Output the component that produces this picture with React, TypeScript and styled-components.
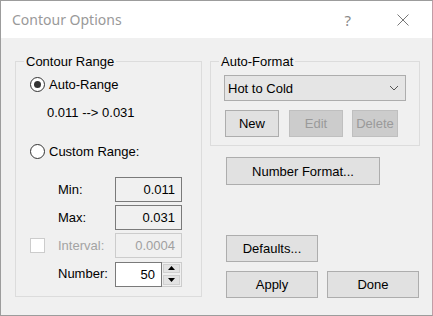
import { createGlobalStyle, styled } from 'styled-components';

const GlobalStyle = createGlobalStyle`
  html, body {
    margin: 0;
    padding: 0;
    background: #f0f0f0;
  }
  body {
    font-family: "Liberation Sans", Arial, sans-serif;
    font-size: 13px;
    color: #000;
  }
`;

const Window = styled.div`
  width: 433px;
  height: 316px;
  box-sizing: border-box;
  border: 1px solid #9c9c9c;
  border-right-color: #c29ca6;
  display: flex;
  flex-direction: column;
  background: #f0f0f0;
  overflow: hidden;
`;

const TitleBar = styled.div`
  height: 37px;
  flex-shrink: 0;
  background: #fff;
  display: flex;
  align-items: center;
  padding-left: 11px;
  padding-right: 23px;
  font-family: "Noto Sans", "Open Sans", sans-serif;
  color: #999;
`;

const TitleText = styled.span`
  flex: 1;
  font-size: 14px;
`;

const HelpGlyph = styled.span`
  font-size: 15px;
  color: #8a8a8a;
  margin-right: 46px;
`;

const Body = styled.div`
  flex: 1;
  display: flex;
  gap: 8px;
  padding: 16px 0 0 14px;
`;

const Group = styled.fieldset<{ $width: number; $height: number }>`
  margin: 0;
  padding: 0;
  min-width: 0;
  width: ${(p) => p.$width}px;
  height: ${(p) => p.$height}px;
  box-sizing: border-box;
  border: 1px solid #dcdcdc;
  legend {
    margin-left: 8px;
    padding: 0 2px;
    line-height: 15px;
  }
`;

const GroupInner = styled.div`
  display: flex;
  flex-direction: column;
  align-items: flex-start;
  padding: 8px 0 0 14px;
`;

const RadioRow = styled.label<{ $mt?: number }>`
  display: flex;
  align-items: center;
  gap: 4px;
  height: 15px;
  margin-top: ${(p) => p.$mt ?? 0}px;
`;

const RadioCircle = styled.span<{ $checked?: boolean }>`
  width: 15px;
  height: 15px;
  box-sizing: border-box;
  border-radius: 50%;
  border: 1px solid #333;
  background: #fff;
  display: flex;
  align-items: center;
  justify-content: center;
  &::after {
    content: '';
    width: 7px;
    height: 7px;
    border-radius: 50%;
    background: ${(p) => (p.$checked ? '#333' : 'transparent')};
  }
`;

const RangeText = styled.div`
  margin: 13px 0 0 17px;
  line-height: 15px;
`;

const FormGrid = styled.div`
  display: grid;
  grid-template-columns: 28px 57px 67px;
  grid-auto-rows: 25px;
  row-gap: 3px;
  align-items: center;
  margin-top: 18px;
`;

const FieldLabel = styled.span<{ $disabled?: boolean }>`
  grid-column: 2;
  color: ${(p) => (p.$disabled ? '#a3a3a3' : '#000')};
`;

const Field = styled.div<{ $disabled?: boolean }>`
  grid-column: 3;
  height: 25px;
  box-sizing: border-box;
  border: 1px solid ${(p) => (p.$disabled ? '#cccccc' : '#7a7a7a')};
  background: #f0f0f0;
  color: ${(p) => (p.$disabled ? '#a0a0a0' : '#000')};
  display: flex;
  align-items: center;
  justify-content: flex-end;
  padding-right: 6px;
`;

const CheckBox = styled.span`
  grid-column: 1;
  width: 15px;
  height: 15px;
  box-sizing: border-box;
  border: 1px solid #cccccc;
  background: #fff;
`;

const NumberBox = styled.div`
  grid-column: 3;
  height: 25px;
  display: flex;
  margin-top: 1px;
`;

const NumberInput = styled.div`
  width: 47px;
  box-sizing: border-box;
  border: 1px solid #7a7a7a;
  background: #fff;
  display: flex;
  align-items: center;
  justify-content: flex-end;
  padding-right: 6px;
`;

const Spinner = styled.div`
  width: 20px;
  box-sizing: border-box;
  border: 1px solid #cccccc;
  border-left: none;
  display: flex;
  flex-direction: column;
  background: #f0f0f0;
`;

const SpinButton = styled.div`
  flex: 1;
  margin: 1px;
  background: #e3e3e3;
  border: 1px solid #d0d0d0;
  display: flex;
  align-items: center;
  justify-content: center;
`;

const RightColumn = styled.div`
  display: flex;
  flex-direction: column;
  align-items: flex-start;
`;

const AutoInner = styled.div`
  display: flex;
  flex-direction: column;
  padding: 6px 0 0 13px;
`;

const Combo = styled.div`
  width: 182px;
  height: 26px;
  box-sizing: border-box;
  border: 1px solid #adadad;
  background: #e5e5e5;
  display: flex;
  align-items: center;
  justify-content: space-between;
  padding: 0 6px 0 3px;
`;

const ButtonRow = styled.div`
  display: flex;
  margin: 9px 0 0 1px;
`;

const Button = styled.div<{ $w: number; $h?: number; $disabled?: boolean; $ml?: number; $mt?: number }>`
  width: ${(p) => p.$w}px;
  height: ${(p) => p.$h ?? 27}px;
  margin-left: ${(p) => p.$ml ?? 0}px;
  margin-top: ${(p) => p.$mt ?? 0}px;
  box-sizing: border-box;
  border: 1px solid ${(p) => (p.$disabled ? '#bfbfbf' : '#adadad')};
  background: ${(p) => (p.$disabled ? '#cccccc' : '#e1e1e1')};
  color: ${(p) => (p.$disabled ? '#9a9a9a' : '#000')};
  display: flex;
  align-items: center;
  justify-content: center;
  flex-shrink: 0;
`;

const FooterRow = styled.div`
  display: flex;
  margin: 9px 0 0 16px;
`;

function Chevron() {
  return (
    <svg width="10" height="6" viewBox="0 0 10 6">
      <path d="M1 1 L5 5 L9 1" fill="none" stroke="#555" strokeWidth="1" />
    </svg>
  );
}

function Arrow({ up }: { up?: boolean }) {
  return (
    <svg width="7" height="4" viewBox="0 0 7 4">
      <path d={up ? 'M0 4 L3.5 0 L7 4 Z' : 'M0 0 L3.5 4 L7 0 Z'} fill="#000" />
    </svg>
  );
}

function CloseIcon() {
  return (
    <svg width="12" height="12" viewBox="0 0 12 12">
      <path d="M0.5 0.5 L11.5 11.5 M11.5 0.5 L0.5 11.5" stroke="#777" strokeWidth="1" />
    </svg>
  );
}

export default function App() {
  return (
    <>
      <GlobalStyle />
      <Window>
        <TitleBar>
          <TitleText>Contour Options</TitleText>
          <HelpGlyph>?</HelpGlyph>
          <CloseIcon />
        </TitleBar>
        <Body>
          <Group $width={187} $height={243}>
            <legend>Contour Range</legend>
            <GroupInner>
              <RadioRow>
                <RadioCircle $checked />
                <span>Auto-Range</span>
              </RadioRow>
              <RangeText>0.011 --&gt; 0.031</RangeText>
              <RadioRow $mt={24}>
                <RadioCircle />
                <span>Custom Range:</span>
              </RadioRow>
              <FormGrid>
                <FieldLabel>Min:</FieldLabel>
                <Field>0.011</Field>
                <FieldLabel>Max:</FieldLabel>
                <Field>0.031</Field>
                <CheckBox />
                <FieldLabel $disabled>Interval:</FieldLabel>
                <Field $disabled>0.0004</Field>
                <FieldLabel>Number:</FieldLabel>
                <NumberBox>
                  <NumberInput>50</NumberInput>
                  <Spinner>
                    <SpinButton>
                      <Arrow up />
                    </SpinButton>
                    <SpinButton>
                      <Arrow />
                    </SpinButton>
                  </Spinner>
                </NumberBox>
              </FormGrid>
            </GroupInner>
          </Group>
          <RightColumn>
            <Group $width={210} $height={92}>
              <legend>Auto-Format</legend>
              <AutoInner>
                <Combo>
                  <span>Hot to Cold</span>
                  <Chevron />
                </Combo>
                <ButtonRow>
                  <Button $w={54}>New</Button>
                  <Button $w={54} $ml={10} $disabled>
                    Edit
                  </Button>
                  <Button $w={46} $ml={9} $disabled>
                    Delete
                  </Button>
                </ButtonRow>
              </AutoInner>
            </Group>
            <Button $w={154} $h={28} $ml={16} $mt={11}>
              Number Format...
            </Button>
            <Button $w={92} $ml={16} $mt={50}>
              Defaults...
            </Button>
            <FooterRow>
              <Button $w={92}>Apply</Button>
              <Button $w={92} $ml={9}>
                Done
              </Button>
            </FooterRow>
          </RightColumn>
        </Body>
      </Window>
    </>
  );
}
